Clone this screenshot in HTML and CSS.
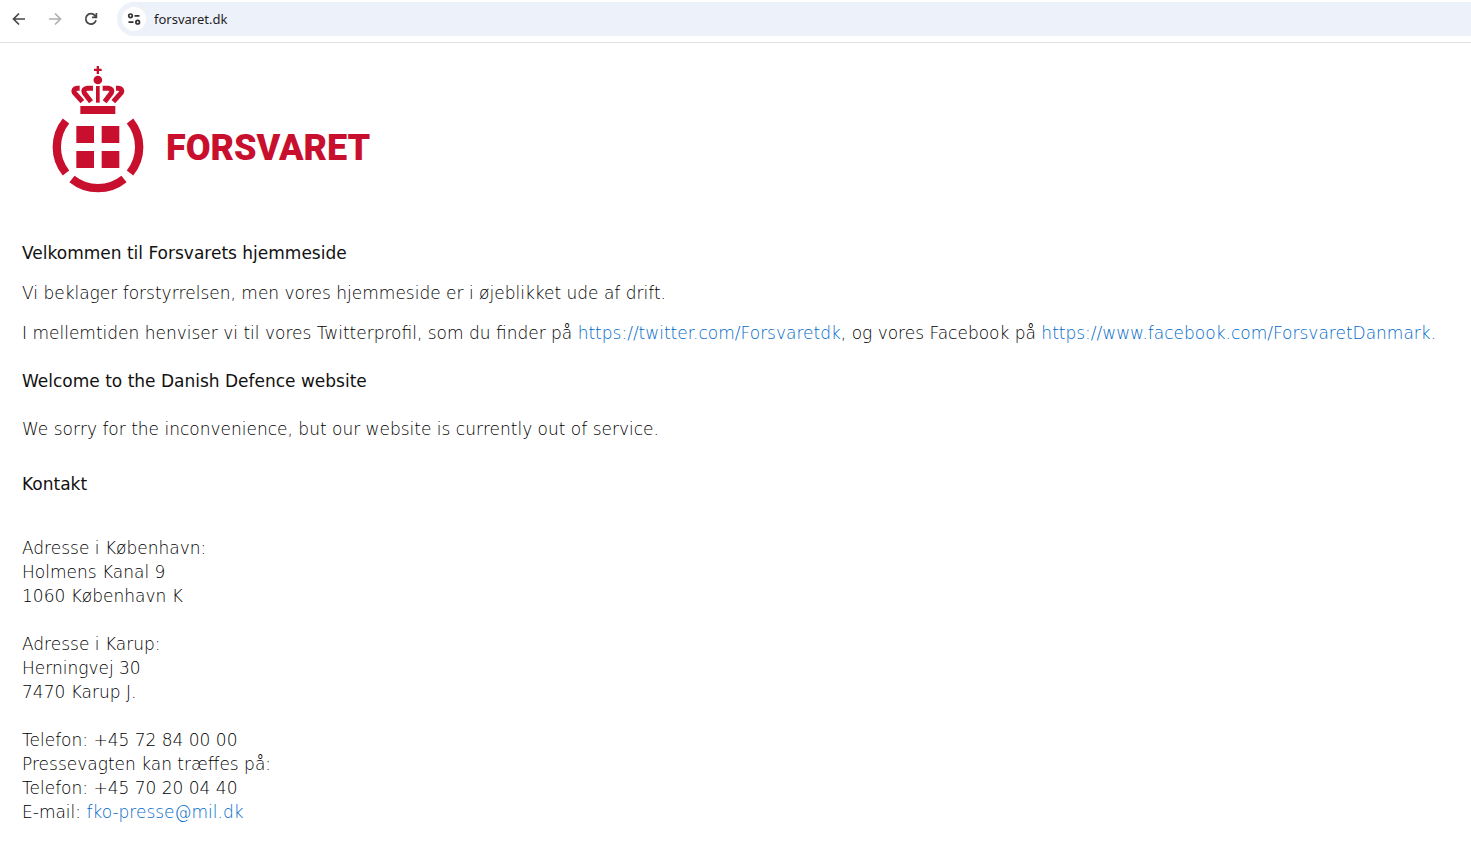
FILE: index.html
```html
<!DOCTYPE html>
<html lang="da">
<head>
<meta charset="UTF-8">
<title>Forsvaret</title>
<link rel="stylesheet" href="styles.css">
</head>
<body>
<nav class="toolbar" aria-label="Browser">
    <button type="button" class="nav-btn" aria-label="Tilbage">
        <svg width="16" height="16" viewBox="0 0 16 16"><path d="M14 8H3M8 2.5L2.5 8L8 13.5"/></svg>
    </button>
    <button type="button" class="nav-btn" aria-label="Frem" disabled>
        <svg width="16" height="16" viewBox="0 0 16 16"><path d="M2 8H13M8 2.5L13.5 8L8 13.5"/></svg>
    </button>
    <button type="button" class="nav-btn" aria-label="Genindlæs">
        <svg width="16" height="16" viewBox="0 0 16 16"><path d="M13 9.2A5.2 5.2 0 1 1 12 4.6L13.2 6M13.4 2V6.4H9"/></svg>
    </button>
    <div class="address-bar">
        <button type="button" class="site-info" aria-label="Oplysninger om websitet">
            <svg width="14" height="14" viewBox="0 0 14 14"><circle cx="3.5" cy="3.8" r="1.8"/><path d="M7.5 3.8H12.5M1.5 10.2H6.5"/><circle cx="10.7" cy="10.2" r="1.8"/></svg>
        </button>
        <input type="text" class="url" aria-label="Adresse" value="forsvaret.dk">
    </div>
</nav>
<main class="content">
    <div class="logo">
        <svg class="emblem" width="120" height="145" viewBox="0 0 360 435">
            <!-- ring -->
            <g class="ring">
                <path d="M78 195A124 124 0 0 0 78 351"/>
                <path d="M270 195A124 124 0 0 1 270 351"/>
                <path d="M96 369A124 124 0 0 0 252 369"/>
            </g>
            <!-- shield squares -->
            <path d="M109 210h53v51h-53zM185 210h53v51h-53zM109 285h53v51h-53zM185 285h53v51h-53z"/>
            <!-- crown -->
            <path d="M121 150h105v24h-105z"/>
            <path d="M170 30h7v8h8v7h-8v9h-7v-9h-8v-7h8z"/>
            <circle cx="173.500" cy="72" r="13"/>
            <path d="M168 90h11v50h-11z"/>
            <g class="arches">
                <path d="M119 97H112Q98 99 103 110L127 137"/>
                <path d="M159 97H142Q127 99 133 111L153 137"/>
                <path d="M188 97H205Q220 99 214 111L194 137"/>
                <path d="M228 97H235Q249 99 244 110L220 137"/>
            </g>
        </svg>
        <span class="wordmark">FORSVARET</span>
    </div>
    <h1>Velkommen til Forsvarets hjemmeside</h1>
    <p>Vi beklager forstyrrelsen, men vores hjemmeside er i øjeblikket ude af drift.</p>
    <p>I mellemtiden henviser vi til vores Twitterprofil, som du finder på <a href="https://twitter.com/Forsvaretdk">https://twitter.com/Forsvaretdk</a>, og vores Facebook på <a href="https://www.facebook.com/ForsvaretDanmark">https://www.facebook.com/ForsvaretDanmark.</a></p>
    <h2>Welcome to the Danish Defence website</h2>
    <p>We sorry for the inconvenience, but our website is currently out of service.</p>
    <h2 class="contact-title">Kontakt</h2>
    <address>
        Adresse i København:<br>
        Holmens Kanal 9<br>
        1060 København K<br>
        <br>
        Adresse i Karup:<br>
        Herningvej 30<br>
        7470 Karup J.<br>
        <br>
        Telefon: +45 72 84 00 00<br>
        Pressevagten kan træffes på:<br>
        Telefon: +45 70 20 04 40<br>
        E-mail: <a href="mailto:fko-presse@mil.dk">fko-presse@mil.dk</a>
    </address>
</main>
</body>
</html>
```
FILE: styles.css
```css
body {
    margin: 0;
    background-color: #fff;
    color: #000;
    font-family: Verdana, "DejaVu Sans", sans-serif;
    font-size: 17px;
    font-weight: 200;
    line-height: 24px;
}
.toolbar {
    display: flex;
    align-items: center;
    padding: 2px 0 6px 1px;
    border-bottom: 1px solid #dfe1e5;
}
.nav-btn {
    display: flex;
    align-items: center;
    justify-content: center;
    width: 36px;
    height: 34px;
    padding: 0;
    border: none;
    background: none;
    color: #474747;
}
.nav-btn:disabled {
    color: #b0b0b0;
}
.nav-btn svg, .site-info svg {
    fill: none;
    stroke: currentColor;
    stroke-width: 1.7;
}
.address-bar {
    display: flex;
    flex: 1;
    align-items: center;
    gap: 8px;
    height: 34px;
    margin-left: 8px;
    padding-left: 5px;
    border-radius: 17px 0 0 17px;
    background-color: #edf1fa;
}
.site-info {
    display: flex;
    align-items: center;
    justify-content: center;
    width: 24px;
    height: 24px;
    padding: 0;
    border: none;
    border-radius: 50%;
    background-color: #fff;
    color: #333;
}
.url {
    flex: 1;
    padding: 0;
    border: none;
    outline: none;
    background: none;
    color: #1f1f1f;
    font-family: "Noto Sans", sans-serif;
    font-size: 13px;
}
.content {
    padding: 13px 22px 24px;
}
.logo {
    display: flex;
    align-items: center;
    margin: 0 0 40px 18px;
    color: #c8102e;
}
.emblem {
    fill: currentColor;
}
.ring, .arches {
    fill: none;
    stroke: currentColor;
}
.ring {
    stroke-width: 25;
}
.arches {
    stroke-width: 15;
}
.wordmark {
    padding: 38px 0 0 6px;
    font-family: Roboto, sans-serif;
    font-size: 36px;
    font-weight: 900;
    line-height: 40px;
}
h1, h2 {
    margin: 0 0 16px;
    color: #111;
    font-size: 17px;
    font-weight: 500;
}
h2 {
    margin: 24px 0;
}
p {
    margin: 0 0 16px;
}
.contact-title {
    margin: 31px 0 40px;
}
address {
    font-style: normal;
}
a {
    color: #0069c8;
    text-decoration: none;
}
```
